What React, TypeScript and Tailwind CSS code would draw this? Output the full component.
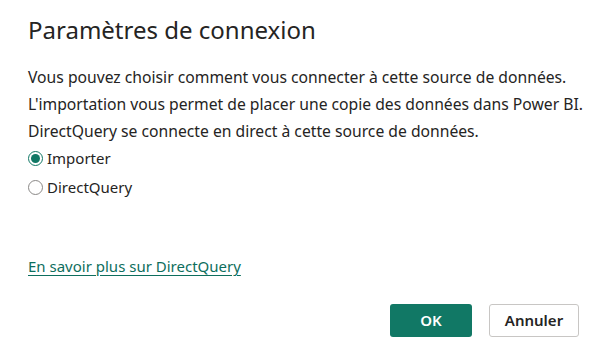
import { useState } from "react";

const Radio = ({ checked, label, onClick }: { checked: boolean; label: string; onClick: () => void }) => (
  <button type="button" onClick={onClick} className="flex items-center gap-[4px] h-[29px] text-left">
    <span
      className={
        checked
          ? "w-[15px] h-[15px] rounded-full border-[1.5px] border-[#117865] flex items-center justify-center"
          : "w-[15px] h-[15px] rounded-full border border-[#8a8886] bg-white"
      }
    >
      {checked && <span className="w-[9px] h-[9px] rounded-full bg-[#117865]" />}
    </span>
    <span className="text-[15px] text-[#252423]">{label}</span>
  </button>
);

export default function App() {
  const [mode, setMode] = useState<"import" | "direct">("import");

  return (
    <div
      className="w-[590px] h-[352px] overflow-hidden bg-white flex flex-col px-[28px] pt-[11px] pb-[15px] text-[#252423]"
      style={{ fontFamily: '"Segoe UI", "Noto Sans", sans-serif' }}
    >
      <h1 className="text-[24px] leading-[38px] font-normal">Paramètres de connexion</h1>
      <div className="mt-[15px] -mr-[28px] text-[15.7px] leading-[27px] whitespace-nowrap">
        <p>Vous pouvez choisir comment vous connecter à cette source de données.</p>
        <p>L'importation vous permet de placer une copie des données dans Power BI.</p>
        <p>DirectQuery se connecte en direct à cette source de données.</p>
      </div>
      <div className="mt-[-1px] flex flex-col">
        <Radio checked={mode === "import"} label="Importer" onClick={() => setMode("import")} />
        <Radio checked={mode === "direct"} label="DirectQuery" onClick={() => setMode("direct")} />
      </div>
      <a href="#" className="mt-[53px] text-[15px] text-[#0e6e5d] underline underline-offset-[3px] self-start">
        En savoir plus sur DirectQuery
      </a>
      <div className="mt-auto -mr-[17px] flex justify-end gap-[17px]">
        <button className="shrink-0 w-[82px] h-[33px] rounded-[3px] bg-[#117865] text-white text-[15px] font-semibold">OK</button>
        <button className="shrink-0 w-[90px] h-[33px] rounded-[3px] border border-[#c8c6c4] bg-white text-[15px] font-semibold text-[#252423]">
          Annuler
        </button>
      </div>
    </div>
  );
}
